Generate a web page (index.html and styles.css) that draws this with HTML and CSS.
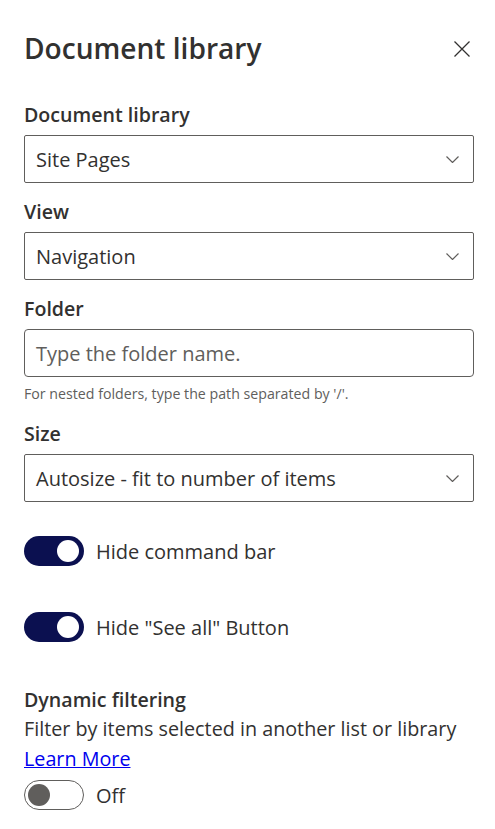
FILE: index.html
```html
<!DOCTYPE html>
<html lang="en">
<head>
<meta charset="utf-8">
<title>Document library</title>
<link rel="stylesheet" href="styles.css">
</head>
<body>
<div class="panel">
  <div class="header">
    <h1 class="title">Document library</h1>
    <button class="close" aria-label="Close">
      <svg width="16" height="16" viewBox="0 0 16 16"><path d="M0.5 0.5 L15.5 15.5 M15.5 0.5 L0.5 15.5" stroke="#323130" stroke-width="1.3" fill="none"/></svg>
    </button>
  </div>

  <div class="field first">
    <div class="label">Document library</div>
    <div class="dropdown">
      <span>Site Pages</span>
      <svg class="chev" width="13" height="7" viewBox="0 0 13 7"><polyline points="0.5,0.5 6.5,6.5 12.5,0.5" stroke="#605e5c" stroke-width="1.2" fill="none"/></svg>
    </div>
  </div>

  <div class="field">
    <div class="label">View</div>
    <div class="dropdown">
      <span>Navigation</span>
      <svg class="chev" width="13" height="7" viewBox="0 0 13 7"><polyline points="0.5,0.5 6.5,6.5 12.5,0.5" stroke="#605e5c" stroke-width="1.2" fill="none"/></svg>
    </div>
  </div>

  <div class="field">
    <div class="label">Folder</div>
    <div class="textbox"><span class="placeholder">Type the folder name.</span></div>
    <div class="help">For nested folders, type the path separated by '/'.</div>
  </div>

  <div class="field size">
    <div class="label">Size</div>
    <div class="dropdown">
      <span>Autosize - fit to number of items</span>
      <svg class="chev" width="13" height="7" viewBox="0 0 13 7"><polyline points="0.5,0.5 6.5,6.5 12.5,0.5" stroke="#605e5c" stroke-width="1.2" fill="none"/></svg>
    </div>
  </div>

  <div class="toggle-row row1">
    <span class="toggle on"><span class="thumb"></span></span>
    <span class="toggle-text">Hide command bar</span>
  </div>

  <div class="toggle-row row2">
    <span class="toggle on"><span class="thumb"></span></span>
    <span class="toggle-text">Hide "See all" Button</span>
  </div>

  <div class="dynamic">
    <div class="label">Dynamic filtering</div>
    <div class="desc">Filter by items selected in another list or library</div>
    <a class="link" href="#">Learn More</a>
    <div class="toggle-row row3">
      <span class="toggle off"><span class="thumb"></span></span>
      <span class="toggle-text">Off</span>
    </div>
  </div>
</div>
</body>
</html>
```

FILE: styles.css
```css
* { box-sizing: border-box; }

body {
  margin: 0;
  background: #ffffff;
  font-family: "Segoe UI", "Open Sans", "Noto Sans", sans-serif;
  color: #323130;
}

.panel {
  width: 495px;
  padding: 28px 21px 0 24px;
}

.header {
  display: flex;
  justify-content: space-between;
  align-items: flex-start;
  height: 40px;
}

.title {
  margin: 0;
  font-size: 28.1px;
  font-weight: 600;
  line-height: 40px;
  color: #323130;
}

.close {
  margin: 13px 4px 0 0;
  padding: 0;
  border: 0;
  background: none;
  width: 16px;
  height: 16px;
  display: flex;
}

.field { margin-top: 15px; }
.field.first { margin-top: 33px; }
.field.size { margin-top: 17px; }

.label {
  font-size: 19.6px;
  font-weight: 600;
  line-height: 28px;
  margin-bottom: 6px;
  color: #323130;
}

.dropdown, .textbox {
  height: 48px;
  border: 1px solid #605e5c;
  border-radius: 2px;
  display: flex;
  align-items: center;
  justify-content: space-between;
  padding: 0 14px 0 11px;
  font-size: 20px;
  color: #323130;
}

.textbox { border-radius: 4px; }

.placeholder { color: #605e5c; }

.help {
  margin-top: 8px;
  font-size: 14.2px;
  line-height: 18px;
  color: #605e5c;
}

.toggle-row {
  display: flex;
  align-items: center;
  gap: 12px;
}

.row1 { margin-top: 34px; }
.row2 { margin-top: 46px; }
.row3 { margin-top: 6px; }

.toggle {
  width: 60px;
  height: 30px;
  border-radius: 15px;
  display: flex;
  align-items: center;
  padding: 0 4px;
  flex: none;
}

.toggle.on {
  background: #0b1050;
  justify-content: flex-end;
  padding-right: 5px;
}

.toggle.off {
  background: #ffffff;
  border: 1px solid #605e5c;
  padding-left: 3px;
}

.thumb {
  width: 22px;
  height: 22px;
  border-radius: 50%;
}

.toggle.on .thumb { background: #ffffff; }
.toggle.off .thumb { background: #605e5c; }

.toggle-text {
  font-size: 20px;
  line-height: 28px;
  padding-top: 2px;
  color: #323130;
}

.dynamic { margin-top: 44px; }

.dynamic .label { margin-bottom: 0; }

.desc {
  font-size: 19.75px;
  line-height: 30px;
  color: #323130;
}

.link {
  display: inline-block;
  font-size: 19.75px;
  line-height: 30px;
  color: #0000ee;
  text-decoration: underline;
}
```
